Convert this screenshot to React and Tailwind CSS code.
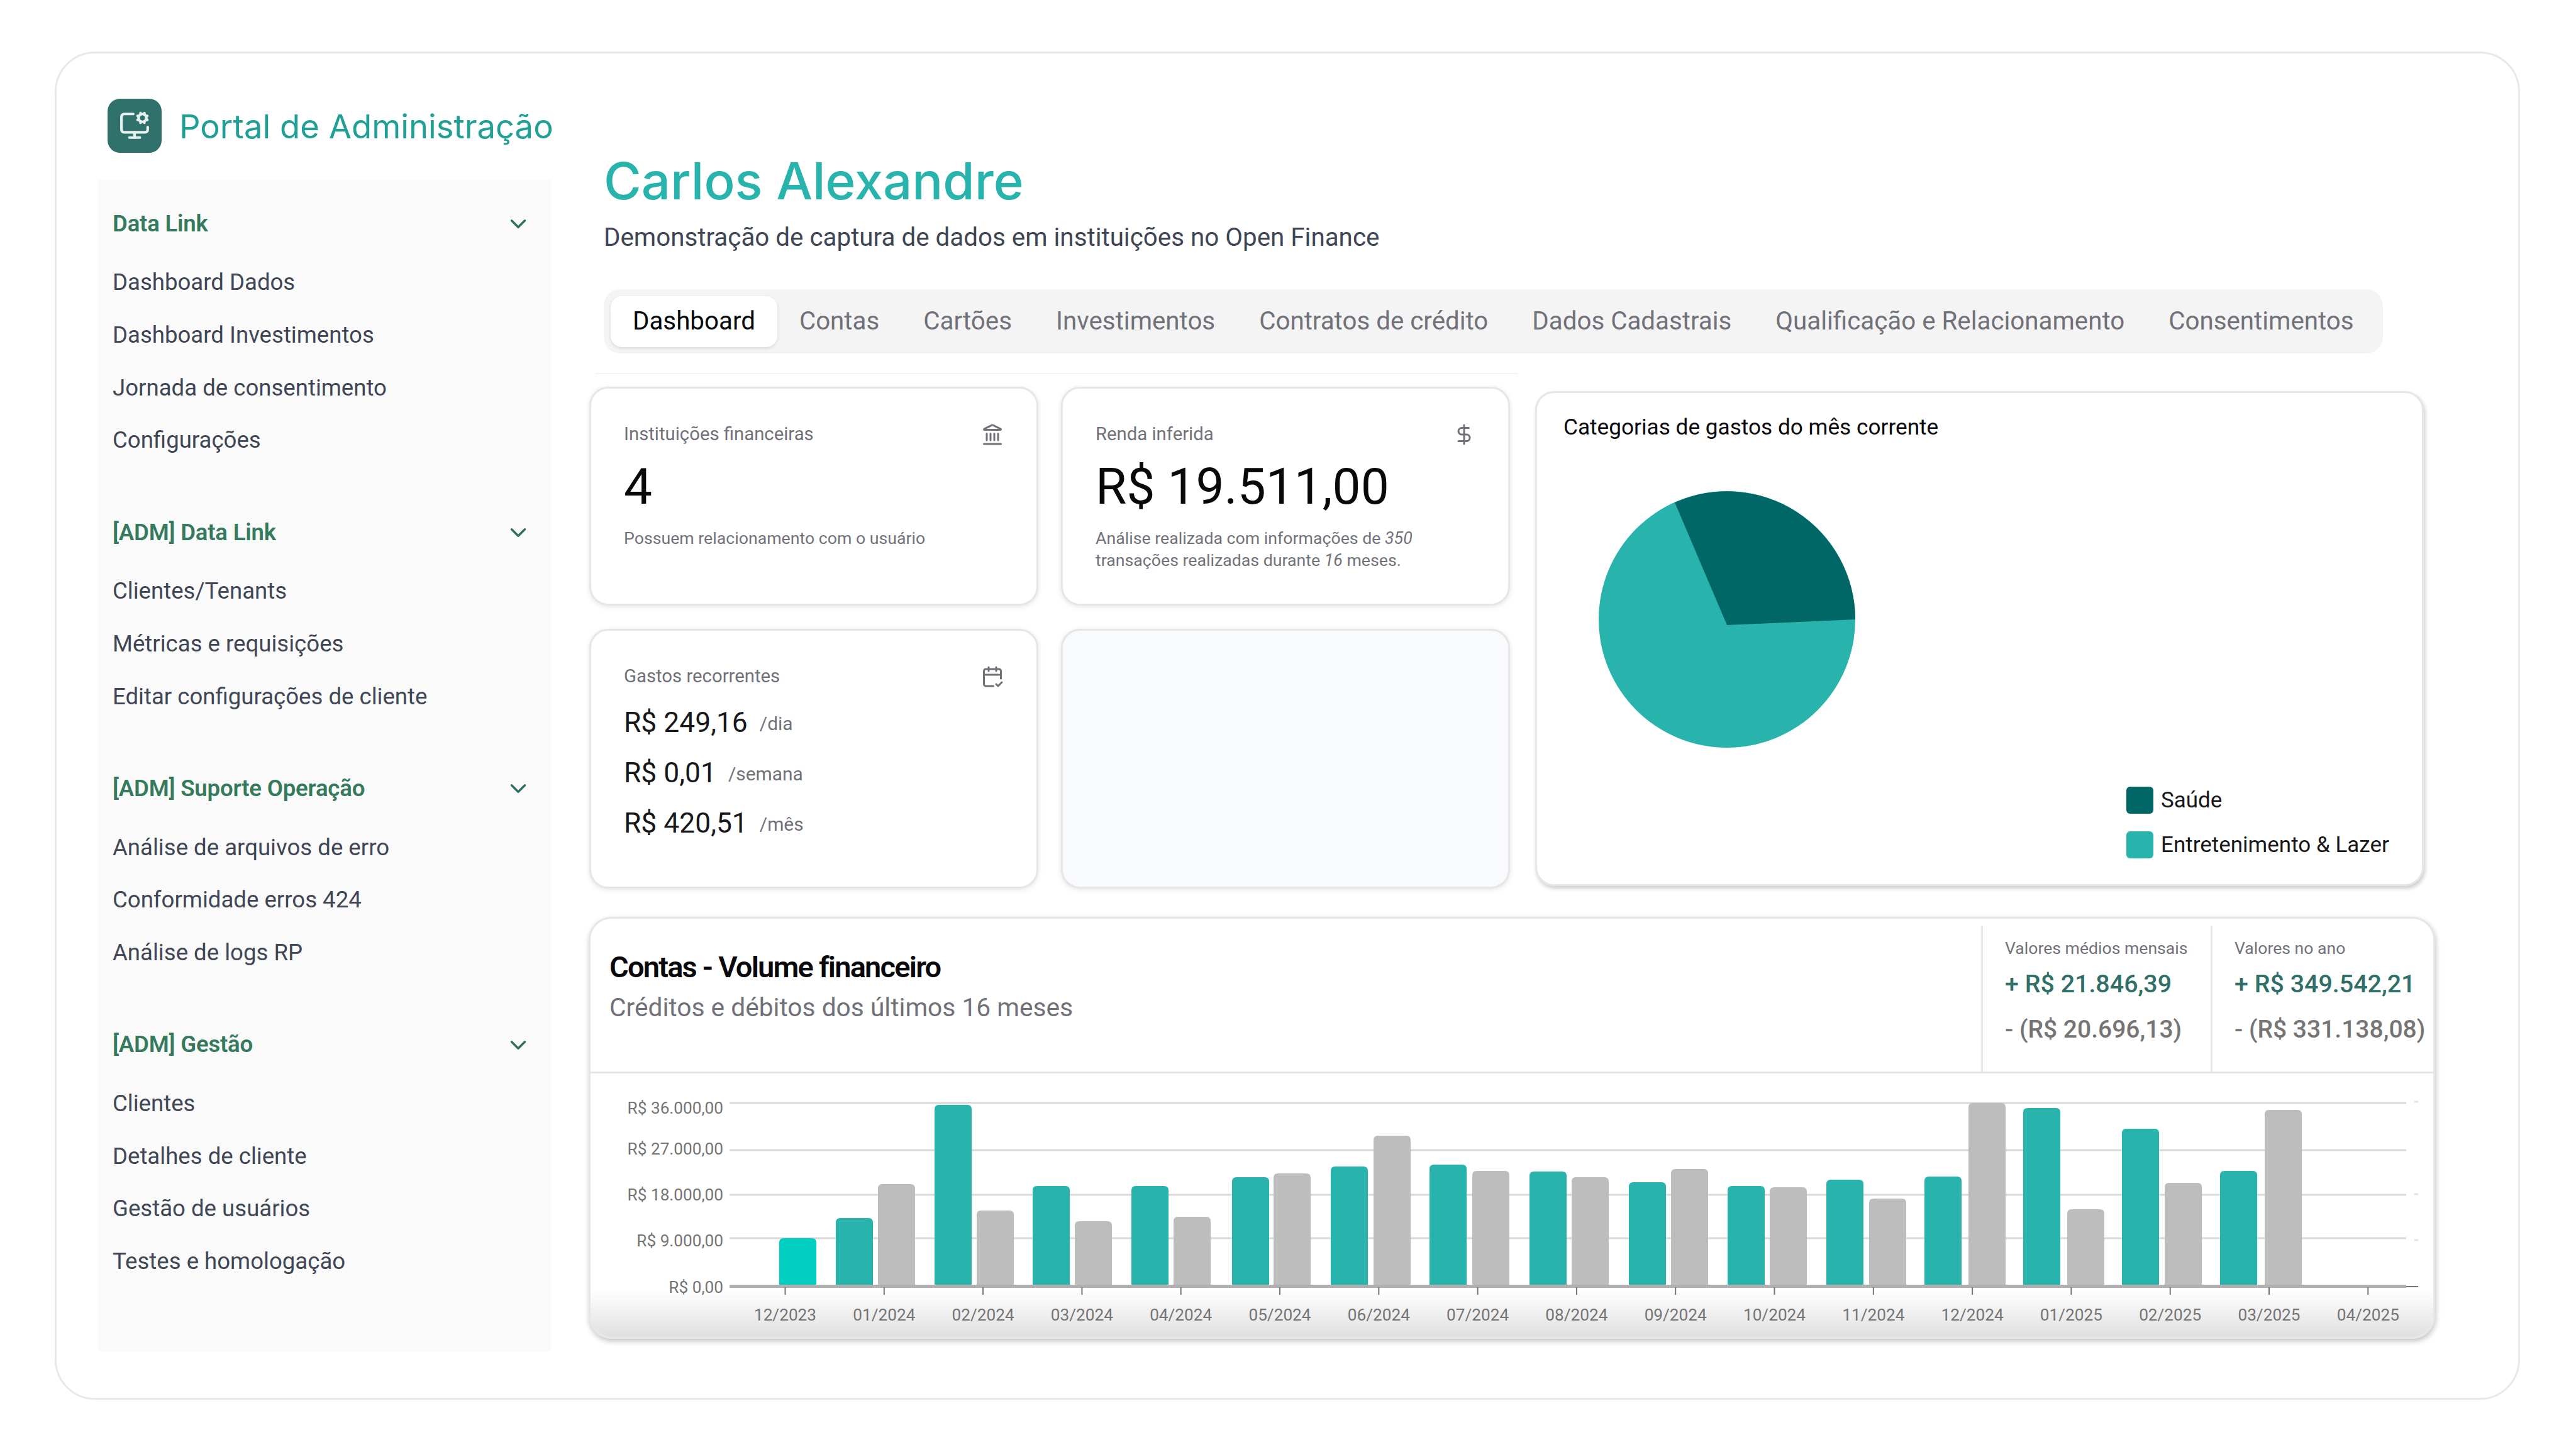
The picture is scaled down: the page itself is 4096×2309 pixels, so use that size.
import React from 'react';
import { CalendarCheck2, ChevronDown, DollarSign, Landmark, MonitorCog } from 'lucide-react';

const MENU = [
  { title: 'Data Link', items: ['Dashboard Dados', 'Dashboard Investimentos', 'Jornada de consentimento', 'Configurações'] },
  { title: '[ADM] Data Link', items: ['Clientes/Tenants', 'Métricas e requisições', 'Editar configurações de cliente'] },
  { title: '[ADM] Suporte Operação', items: ['Análise de arquivos de erro', 'Conformidade erros 424', 'Análise de logs RP'] },
  { title: '[ADM] Gestão', items: ['Clientes', 'Detalhes de cliente', 'Gestão de usuários', 'Testes e homologação'] },
];

const TABS = ['Dashboard', 'Contas', 'Cartões', 'Investimentos', 'Contratos de crédito', 'Dados Cadastrais', 'Qualificação e Relacionamento', 'Consentimentos'];

// x, top, colour of every bar (page coordinates, all sit on the baseline)
const BARS = [
  [1239, 1969, '#00cec1'],
  [1329, 1937, '#28b4ac'], [1396, 1883, '#bdbdbd'],
  [1486, 1757, '#28b4ac'], [1553, 1925, '#bdbdbd'],
  [1642, 1886, '#28b4ac'], [1709, 1942, '#bdbdbd'],
  [1799, 1886, '#28b4ac'], [1866, 1935, '#bdbdbd'],
  [1959, 1872, '#28b4ac'], [2025, 1866, '#bdbdbd'],
  [2116, 1855, '#28b4ac'], [2184, 1806, '#bdbdbd'],
  [2273, 1852, '#28b4ac'], [2341, 1862, '#bdbdbd'],
  [2432, 1863, '#28b4ac'], [2499, 1872, '#bdbdbd'],
  [2590, 1880, '#28b4ac'], [2657, 1859, '#bdbdbd'],
  [2747, 1886, '#28b4ac'], [2814, 1888, '#bdbdbd'],
  [2904, 1876, '#28b4ac'], [2972, 1906, '#bdbdbd'],
  [3060, 1871, '#28b4ac'], [3130, 1754, '#bdbdbd'],
  [3217, 1762, '#28b4ac'], [3287, 1923, '#bdbdbd'],
  [3374, 1795, '#28b4ac'], [3442, 1881, '#bdbdbd'],
  [3530, 1862, '#28b4ac'], [3601, 1765, '#bdbdbd'],
];

const MONTHS = ['12/2023', '01/2024', '02/2024', '03/2024', '04/2024', '05/2024', '06/2024', '07/2024', '08/2024', '09/2024', '10/2024', '11/2024', '12/2024', '01/2025', '02/2025', '03/2025', '04/2025'];

const GRID = [
  [1754, 'R$ 36.000,00', 1762],
  [1829, 'R$ 27.000,00', 1827],
  [1900, 'R$ 18.000,00', 1900],
  [1969, 'R$ 9.000,00', 1973],
];

const barPath = (x, top) => {
  const w = 59;
  const r = 7;
  return `M${x} ${top + r}Q${x} ${top} ${x + r} ${top}H${x + w - r}Q${x + w} ${top} ${x + w} ${top + r}V2044H${x}Z`;
};

const Sidebar = () => (
  <div className="ml-[66px] w-[720px] shrink-0 pt-[72px]">
    <div className="ml-[15px] flex h-[86px] items-center">
      <div className="flex h-[86px] w-[86px] shrink-0 items-center justify-center rounded-[20px] bg-[#30726b]">
        <MonitorCog size={50} color="#e6f0ee" strokeWidth={2} />
      </div>
      <span className="ml-[28px] pt-[2px] text-[52.6px] whitespace-nowrap font-['Inter'] text-[#20a094]">Portal de Administração</span>
    </div>
    <div className="mt-[43px] flex h-[1864px] flex-col gap-[80.6px] bg-[#fafafa] pt-[46px]">
      {MENU.map((group) => (
        <div key={group.title}>
          <div className="flex h-[48px] items-center justify-between pr-[31px] pl-[23px]">
            <span className="text-[36.6px] font-semibold tracking-[-0.2px] text-[#357a5c]">{group.title}</span>
            <ChevronDown size={42} color="#2f6f5f" strokeWidth={2} />
          </div>
          <div className="mt-[28px]">
            {group.items.map((item) => (
              <div key={item} className="flex h-[83.6px] items-center pl-[23px] text-[36.6px] text-[#3f4655]">{item}</div>
            ))}
          </div>
        </div>
      ))}
    </div>
  </div>
);

const Card = ({ label, icon: Icon, children }) => (
  <div className="rounded-[30px] border-[3px] border-[#e6e6e8] bg-white pt-[55px] pr-[52px] pl-[52px] shadow-[0_2px_8px_rgba(0,0,0,0.1)]">
    <div className="flex h-[36px] items-center justify-between">
      <span className="text-[29.3px] text-[#71717a]">{label}</span>
      <Icon size={36} color="#71717a" strokeWidth={2} />
    </div>
    {children}
  </div>
);

const Recurring = ({ value, unit }) => (
  <div className="flex h-[80px] items-center">
    <span className="text-[44.4px] text-[#18181b]">{value}</span>
    <span className="mt-[5px] ml-[19px] text-[29.9px] text-[#71717a]">{unit}</span>
  </div>
);

const StatColumn = ({ label, plus, minus, width }) => (
  <div className={`${width} mt-[11px] shrink-0 border-l-[3px] border-[#e8e8ea] pt-[18px] pl-[35px] whitespace-nowrap`}>
    <div className="h-[36px] text-[26.6px] leading-[36px] text-[#71717a]">{label}</div>
    <div className="mt-[14px] h-[50px] text-[39.4px] leading-[50px] font-medium text-[#2f6f68]">{plus}</div>
    <div className="mt-[22px] h-[50px] text-[39px] leading-[50px] font-medium text-[#757575]">{minus}</div>
  </div>
);

const VolumeChart = () => (
  <svg viewBox="939 1707 2930 419" width="2930" height="419" className="block">
    {GRID.map(([y]) => (
      <line key={y} x1="1160" x2="3826" y1={y} y2={y} stroke="#d9d9d9" strokeWidth="3" />
    ))}
    {GRID.map(([y, label, textY]) => (
      <text key={label} x="1150" y={textY + 9} textAnchor="end" fontSize="26.2" fill="#757575" fontFamily="Roboto">{label}</text>
    ))}
    <text x="1150" y="2056" textAnchor="end" fontSize="26.2" fill="#757575" fontFamily="Roboto">R$ 0,00</text>
    {[1752, 1899, 1972].map((y) => (
      <line key={y} x1="3839" x2="3845" y1={y} y2={y} stroke="#e2e2e2" strokeWidth="3" />
    ))}
    {BARS.map(([x, top, fill]) => (
      <path key={x} d={barPath(x, top)} fill={fill} />
    ))}
    <line x1="1160" x2="3826" y1="2045.5" y2="2045.5" stroke="#b0b0b0" strokeWidth="5" />
    <line x1="3826" x2="3845" y1="2046" y2="2046" stroke="#777777" strokeWidth="2" />
    {MONTHS.map((m, i) => {
      const x = 1248.5 + i * 157.3;
      return (
        <g key={m}>
          <line x1={x} x2={x} y1="2047" y2="2059" stroke="#757575" strokeWidth="2" />
          <text x={x} y="2100" textAnchor="middle" fontSize="26.2" fill="#757575" fontFamily="Roboto">{m}</text>
        </g>
      );
    })}
  </svg>
);

const Main = () => (
  <div className="ml-[60px] w-[2936px] shrink-0 pt-[155px]">
    <h1 className="ml-[24px] text-[81.5px] leading-[96px] font-medium font-['Inter'] text-[#28b4ac]">Carlos Alexandre</h1>
    <p className="mt-[14px] ml-[24px] text-[40.35px] leading-[56px] text-[#3f4655]">Demonstração de captura de dados em instituições no Open Finance</p>
    <div className="mt-[54px] ml-[24px] flex h-[102px] w-[2829px] items-center rounded-[26px] bg-[#f4f4f5] px-[11px]">
      {TABS.map((tab, i) => (
        <div
          key={tab}
          className={i === 0
            ? 'flex h-[81px] items-center rounded-[18px] bg-white px-[35px] text-[40.3px] whitespace-nowrap text-[#09090b] shadow-[0_2px_5px_rgba(0,0,0,0.12)]'
            : 'flex h-[81px] items-center px-[35px] text-[40.3px] whitespace-nowrap text-[#71717a]'}
        >
          {tab}
        </div>
      ))}
    </div>
    <div className="mt-[31px] ml-[10px] h-[2px] w-[1468px] bg-[#f4f4f5]" />

    <div className="mt-[20px] ml-[1px] flex h-[798px]">
      <div className="grid w-[1464px] shrink-0 grid-cols-2 grid-rows-[348px_413px] gap-x-[36px] gap-y-[37px]">
        <Card label="Instituições financeiras" icon={Landmark}>
          <div className="mt-[20px] h-[90px] text-[80.2px] leading-[90px] text-[#09090b]">4</div>
          <p className="mt-[20px] text-[26.7px] leading-[35px] text-[#71717a]">Possuem relacionamento com o usuário</p>
        </Card>
        <Card label="Renda inferida" icon={DollarSign}>
          <div className="mt-[20px] h-[90px] text-[80.2px] leading-[90px] text-[#09090b]">R$ 19.511,00</div>
          <p className="mt-[20px] text-[26.7px] leading-[35px] text-[#71717a]">
            Análise realizada com informações de <em>350</em> transações realizadas durante <em>16</em> meses.
          </p>
        </Card>
        <Card label="Gastos recorrentes" icon={CalendarCheck2}>
          <div className="mt-[15px]">
            <Recurring value="R$ 249,16" unit="/dia" />
            <Recurring value="R$ 0,01" unit="/semana" />
            <Recurring value="R$ 420,51" unit="/mês" />
          </div>
        </Card>
        <div className="rounded-[30px] border-[3px] border-[#e6e6e8] bg-[#f9fafb] shadow-[0_2px_8px_rgba(0,0,0,0.1)]" />
      </div>

      <div className="mt-[7px] ml-[40px] h-[787px] w-[1413px] shrink-0 rounded-[30px] border-[3px] border-[#e6e6e8] bg-white pt-[34px] pl-[42px] shadow-[2px_4px_6px_rgba(0,0,0,0.2)]">
        <div className="text-[35.2px] leading-[40px] text-[#09090b]">Categorias de gastos do mês corrente</div>
        <svg viewBox="2542 781 408 408" width="408" height="408" className="mt-[82px] ml-[56px] block">
          <circle cx="2746" cy="985" r="204" fill="#28b4ac" />
          <path d="M2746 994L2663 799A204 204 0 0 1 2950 985Z" fill="#006666" />
        </svg>
        <div className="mt-[62px] ml-[895px] flex flex-col gap-[28px]">
          <div className="flex h-[43px] items-center gap-[12px] text-[35px] text-[#18181b]">
            <span className="h-[43px] w-[43px] rounded-[6px] bg-[#006666]" />
            <span className="pt-[2px]">Saúde</span>
          </div>
          <div className="flex h-[43px] items-center gap-[12px] text-[35px] whitespace-nowrap text-[#18181b]">
            <span className="h-[43px] w-[43px] rounded-[6px] bg-[#28b4ac]" />
            <span className="pt-[2px]">Entretenimento &amp; Lazer</span>
          </div>
        </div>
      </div>
    </div>

    <div className="mt-[45px] h-[671px] w-[2936px] overflow-hidden rounded-[36px] border-[3px] border-[#e6e6e8] bg-white shadow-[1px_4px_8px_rgba(0,0,0,0.24)]">
      <div className="flex h-[246px] border-b-[3px] border-[#e6e6e8]">
        <div className="flex-1 pt-[47px] pl-[30px]">
          <div className="text-[47px] leading-[60px] font-semibold tracking-[-1.8px] text-[#09090b]">Contas - Volume financeiro</div>
          <div className="mt-[9px] text-[40.7px] leading-[50px] text-[#71717a]">Créditos e débitos dos últimos 16 meses</div>
        </div>
        <StatColumn width="w-[365px]" label="Valores médios mensais" plus="+ R$ 21.846,39" minus="- (R$ 20.696,13)" />
        <StatColumn width="w-[354px]" label="Valores no ano" plus="+ R$ 349.542,21" minus="- (R$ 331.138,08)" />
      </div>
      <div className="bg-[linear-gradient(to_bottom,#ffffff_82%,#e0e0e0_100%)]">
        <VolumeChart />
      </div>
    </div>
  </div>
);

const App = () => (
  <div className="h-[2309px] w-[4096px] overflow-hidden bg-white pt-[82px] pl-[87px] font-['Roboto',sans-serif]">
    <div className="flex h-[2144px] w-[3920px] rounded-[64px] border-[3px] border-[#e8e8e8]">
      <Sidebar />
      <Main />
    </div>
  </div>
);

export default App;
